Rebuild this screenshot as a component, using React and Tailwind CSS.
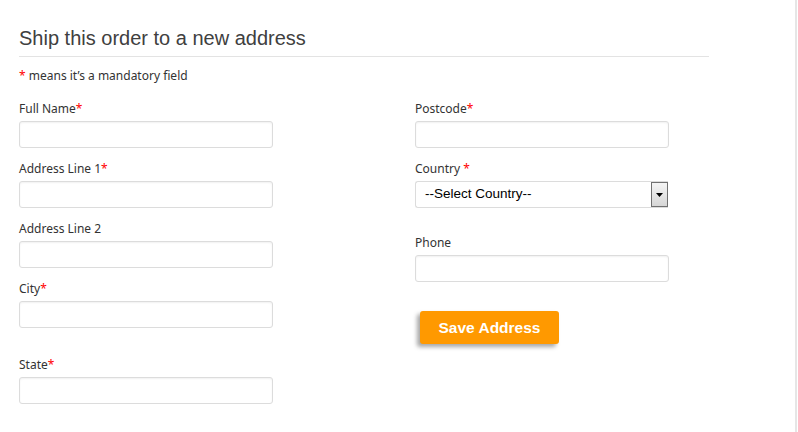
import React from 'react'

function Field({ label, required, className = '' }) {
  return (
    <div className={className}>
      <label className="block h-4 text-[12px] leading-4 text-[#333] font-['Noto_Sans',sans-serif]">
        {label}
        {required && <span className="text-[#ff0000]">*</span>}
      </label>
      <input
        type="text"
        className="mt-[4px] block h-[27px] w-[254px] rounded-[3px] border border-[#dcdcdc] bg-white shadow-[inset_0_1px_2px_rgba(0,0,0,0.06)] outline-none"
      />
    </div>
  )
}

export default function App() {
  return (
    <div className="flex h-[432px] w-[798px] bg-white">
      <div className="w-[795px] pl-[19px] pt-[25px]">
        <h2 className="w-[690px] border-b border-[#e3e3e3] pb-[5px] text-[20px] leading-[26px] text-[#404040] font-['Liberation_Sans',Arial,sans-serif]">
          Ship this order to a new address
        </h2>

        <p className="mt-[11px] h-4 text-[12px] leading-4 text-[#333] font-['Noto_Sans',sans-serif]">
          <span className="text-[#ff0000]">*</span> means it’s a mandatory field
        </p>

        <div className="mt-[17px] flex gap-[142px]">
          {/* left column */}
          <div className="flex flex-col">
            <Field label="Full Name" required />
            <Field label="Address Line 1" required className="mt-[13px]" />
            <Field label="Address Line 2" className="mt-[13px]" />
            <Field label="City" required className="mt-[13px]" />
            <Field label="State" required className="mt-[29px]" />
          </div>

          {/* right column */}
          <div className="flex flex-col">
            <Field label="Postcode" required />

            <div className="mt-[13px]">
              <label className="block h-4 text-[12px] leading-4 text-[#333] font-['Noto_Sans',sans-serif]">
                Country <span className="text-[#ff0000]">*</span>
              </label>
              <div className="mt-[4px] flex h-[27px] w-[253px] items-stretch rounded-l-[3px] border border-r-0 border-[#dcdcdc] bg-white">
                <span className="flex flex-1 items-center pl-[9px] text-[13.5px] text-black font-['Liberation_Sans',Arial,sans-serif]">
                  --Select Country--
                </span>
                <span className="flex w-[17px] items-center justify-center border border-[#707070] bg-gradient-to-b from-[#f4f4f4] to-[#d6d6d6]">
                  <svg width="7" height="4" viewBox="0 0 7 4">
                    <path d="M0 0h7L3.5 4z" fill="#000" />
                  </svg>
                </span>
              </div>
            </div>

            <Field label="Phone" className="mt-[27px]" />

            <button className="ml-[5px] mt-[29px] h-[33px] w-[139px] rounded-[3px] bg-[#ff9900] text-[15.5px] font-bold text-white shadow-[-3px_3px_4px_rgba(0,0,0,0.35)] font-['Liberation_Sans',Arial,sans-serif]">
              Save Address
            </button>
          </div>
        </div>
      </div>
      <div className="w-[2px] bg-[#e6e6e6]" />
      <div className="w-[1px] bg-white" />
    </div>
  )
}
